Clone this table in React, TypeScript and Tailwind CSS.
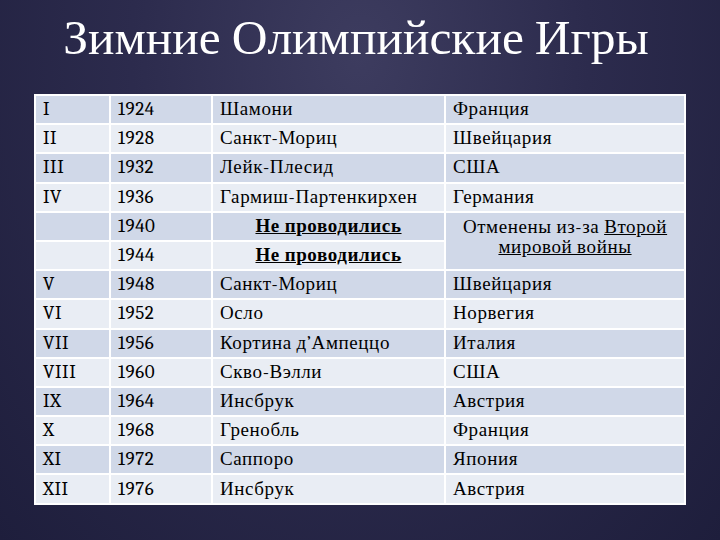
import React from 'react';

type Row = { num: string; year: string; city: string; country: string };

const rows: Row[] = [
  { num: 'I', year: '1924', city: 'Шамони', country: 'Франция' },
  { num: 'II', year: '1928', city: 'Санкт-Мориц', country: 'Швейцария' },
  { num: 'III', year: '1932', city: 'Лейк-Плесид', country: 'США' },
  { num: 'IV', year: '1936', city: 'Гармиш-Партенкирхен', country: 'Германия' },
];

const rowsAfter: Row[] = [
  { num: 'V', year: '1948', city: 'Санкт-Мориц', country: 'Швейцария' },
  { num: 'VI', year: '1952', city: 'Осло', country: 'Норвегия' },
  { num: 'VII', year: '1956', city: 'Кортина д’Ампеццо', country: 'Италия' },
  { num: 'VIII', year: '1960', city: 'Скво-Вэлли', country: 'США' },
  { num: 'IX', year: '1964', city: 'Инсбрук', country: 'Австрия' },
  { num: 'X', year: '1968', city: 'Гренобль', country: 'Франция' },
  { num: 'XI', year: '1972', city: 'Саппоро', country: 'Япония' },
  { num: 'XII', year: '1976', city: 'Инсбрук', country: 'Австрия' },
];

const cell = 'border-2 border-white px-[7px] h-[29.2px] align-middle leading-none';
const odd = 'bg-[#d0d8e8]';
const even = 'bg-[#e9edf4]';

export default function App() {
  return (
    <div className="w-[720px] h-[540px] overflow-hidden bg-[radial-gradient(ellipse_at_50%_10%,#3d3c5f_0%,#2c2b4d_45%,#1e1e3c_100%)] flex flex-col items-center">
      <h1 className="mt-[10px] mr-[8px] text-white text-[49.5px] leading-[56px] font-serif">
        Зимние Олимпийские Игры
      </h1>
      <table className="mt-[28px] w-[650px] table-fixed border-collapse text-[19px] tracking-[0.6px] text-black font-serif">
        <colgroup>
          <col className="w-[75px]" />
          <col className="w-[102px]" />
          <col className="w-[233px]" />
          <col className="w-[240px]" />
        </colgroup>
        <tbody>
          {rows.map((r, i) => (
            <tr key={r.year} className={i % 2 === 0 ? odd : even}>
              <td className={cell}>{r.num}</td>
              <td className={cell}>{r.year}</td>
              <td className={cell}>{r.city}</td>
              <td className={cell}>{r.country}</td>
            </tr>
          ))}
          <tr className={odd}>
            <td className={cell}></td>
            <td className={cell}>1940</td>
            <td className={`${cell} text-center font-bold underline`}>Не проводились</td>
            <td rowSpan={2} className={`border-2 border-white px-[5px] ${odd} text-center align-top pt-[4px] leading-[20px]`}>
              Отменены из-за <span className="underline">Второй</span>
              <br />
              <span className="underline">мировой войны</span>
            </td>
          </tr>
          <tr className={even}>
            <td className={cell}></td>
            <td className={cell}>1944</td>
            <td className={`${cell} text-center font-bold underline`}>Не проводились</td>
          </tr>
          {rowsAfter.map((r, i) => (
            <tr key={r.year} className={i % 2 === 0 ? odd : even}>
              <td className={cell}>{r.num}</td>
              <td className={cell}>{r.year}</td>
              <td className={cell}>{r.city}</td>
              <td className={cell}>{r.country}</td>
            </tr>
          ))}
        </tbody>
      </table>
    </div>
  );
}
